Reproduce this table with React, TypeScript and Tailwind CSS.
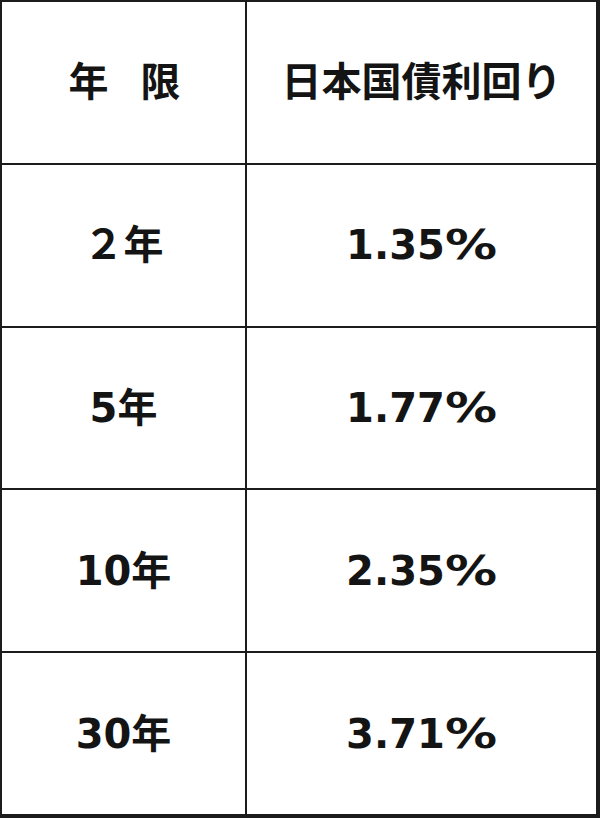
import React from "react";

const rows: [string, string][] = [
  ["２年", "1.35%"],
  ["5年", "1.77%"],
  ["10年", "2.35%"],
  ["30年", "3.71%"],
];

function Pct({ v }: { v: string }) {
  const num = v.replace("%", "");
  return (
    <span className="whitespace-nowrap">
      {num}
      <span className="inline-block origin-left scale-x-[1.3] mr-[12px]">%</span>
    </span>
  );
}

export default function App() {
  return (
    <div className="w-[600px] h-[818px] bg-white">
      <div className="w-full h-full flex flex-col border-l-2 border-t-2 border-r-4 border-b-4 border-[#1c1c1c] font-['DejaVu_Sans','Noto_Sans_CJK_JP',sans-serif] font-bold text-[40px] text-[#141414] leading-none">
        <div className="flex-1 flex border-b-2 border-[#1c1c1c]">
          <div className="w-[245px] border-r-2 border-[#1c1c1c] flex items-center justify-center gap-[32px] pl-[2px]">
            <span>年</span>
            <span>限</span>
          </div>
          <div className="flex-1 flex items-center justify-center">日本国債利回り</div>
        </div>
        {rows.map(([a, b], i) => (
          <div
            key={a}
            className={
              i < rows.length - 1
                ? "flex-1 flex border-b-2 border-[#1c1c1c]"
                : "flex-1 flex"
            }
          >
            <div className="w-[245px] border-r-2 border-[#1c1c1c] flex items-center justify-center">
              {a}
            </div>
            <div className="flex-1 flex items-center justify-center">
              <Pct v={b} />
            </div>
          </div>
        ))}
      </div>
    </div>
  );
}
